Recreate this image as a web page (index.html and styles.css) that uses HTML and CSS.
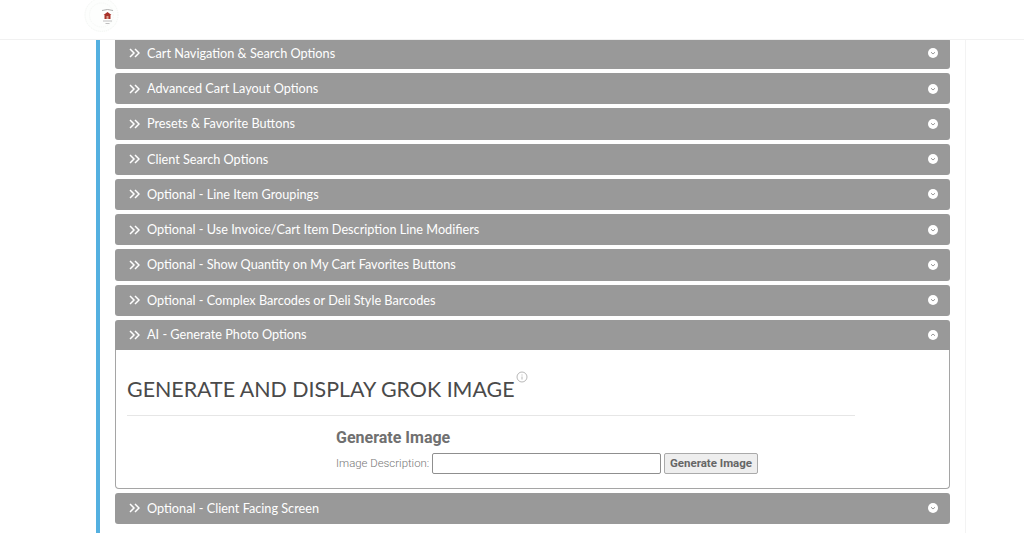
FILE: index.html
```html
<!DOCTYPE html>
<html lang="en">
<head>
<meta charset="utf-8">
<title>Options</title>
<link rel="stylesheet" href="styles.css">
</head>
<body>
<header class="topbar">
  <div class="logo">
    <svg width="44" height="39" viewBox="0 0 44 39">
      <circle cx="21.500" cy="15" r="16.500" fill="#fdfefd" stroke="#f2f5f2" stroke-width="1" stroke-dasharray="1 1"/>
      <circle cx="21.500" cy="15" r="12" fill="none" stroke="#f5f7f5" stroke-width="1" stroke-dasharray="1 1"/>
      <path d="M27.500 12l4 3h-1v4h-6v-4h-1z" fill="#a8322a"/>
      <rect x="26.500" y="16" width="2" height="3" fill="#d9a090"/>
      <path d="M22 10.500q5.500-2 11 0" fill="none" stroke="#9a9a9a" stroke-width="0.800"/>
      <path d="M23 21h9M25.500 23.500h4" stroke="#b0b0b0" stroke-width="0.800"/>
    </svg>
  </div>
</header>
<main class="content">
  <div class="column">
    <section class="acc"><div class="acc-head"><svg class="chev" viewBox="0 0 11 10"><path d="M1 1l4 4-4 4M6 1l4 4-4 4"/></svg><span class="acc-title">Cart Navigation &amp; Search Options</span><span class="toggle"><svg viewBox="0 0 10 10"><path d="M3 4.200l2 1.800 2-1.800" /></svg></span></div></section>
    <section class="acc"><div class="acc-head"><svg class="chev" viewBox="0 0 11 10"><path d="M1 1l4 4-4 4M6 1l4 4-4 4"/></svg><span class="acc-title">Advanced Cart Layout Options</span><span class="toggle"><svg viewBox="0 0 10 10"><path d="M3 4.200l2 1.800 2-1.800" /></svg></span></div></section>
    <section class="acc"><div class="acc-head"><svg class="chev" viewBox="0 0 11 10"><path d="M1 1l4 4-4 4M6 1l4 4-4 4"/></svg><span class="acc-title">Presets &amp; Favorite Buttons</span><span class="toggle"><svg viewBox="0 0 10 10"><path d="M3 4.200l2 1.800 2-1.800" /></svg></span></div></section>
    <section class="acc"><div class="acc-head"><svg class="chev" viewBox="0 0 11 10"><path d="M1 1l4 4-4 4M6 1l4 4-4 4"/></svg><span class="acc-title">Client Search Options</span><span class="toggle"><svg viewBox="0 0 10 10"><path d="M3 4.200l2 1.800 2-1.800" /></svg></span></div></section>
    <section class="acc"><div class="acc-head"><svg class="chev" viewBox="0 0 11 10"><path d="M1 1l4 4-4 4M6 1l4 4-4 4"/></svg><span class="acc-title">Optional - Line Item Groupings</span><span class="toggle"><svg viewBox="0 0 10 10"><path d="M3 4.200l2 1.800 2-1.800" /></svg></span></div></section>
    <section class="acc"><div class="acc-head"><svg class="chev" viewBox="0 0 11 10"><path d="M1 1l4 4-4 4M6 1l4 4-4 4"/></svg><span class="acc-title">Optional - Use Invoice/Cart Item Description Line Modifiers</span><span class="toggle"><svg viewBox="0 0 10 10"><path d="M3 4.200l2 1.800 2-1.800" /></svg></span></div></section>
    <section class="acc"><div class="acc-head"><svg class="chev" viewBox="0 0 11 10"><path d="M1 1l4 4-4 4M6 1l4 4-4 4"/></svg><span class="acc-title">Optional - Show Quantity on My Cart Favorites Buttons</span><span class="toggle"><svg viewBox="0 0 10 10"><path d="M3 4.200l2 1.800 2-1.800" /></svg></span></div></section>
    <section class="acc"><div class="acc-head"><svg class="chev" viewBox="0 0 11 10"><path d="M1 1l4 4-4 4M6 1l4 4-4 4"/></svg><span class="acc-title">Optional - Complex Barcodes or Deli Style Barcodes</span><span class="toggle"><svg viewBox="0 0 10 10"><path d="M3 4.200l2 1.800 2-1.800" /></svg></span></div></section>
    <section class="acc acc-open">
      <div class="acc-head"><svg class="chev" viewBox="0 0 11 10"><path d="M1 1l4 4-4 4M6 1l4 4-4 4"/></svg><span class="acc-title">AI - Generate Photo Options</span><span class="toggle"><svg viewBox="0 0 10 10"><path d="M3 5.800l2-1.800 2 1.800" /></svg></span></div>
      <div class="acc-body">
        <div class="page-head">
          <h2 class="page-title">GENERATE AND DISPLAY GROK IMAGE</h2>
          <svg class="info" viewBox="0 0 12 12"><circle cx="6" cy="6" r="5"/><path d="M6 5.500v3M6 3.500v1"/></svg>
        </div>
        <div class="form-block">
          <h3 class="form-title">Generate Image</h3>
          <div class="form-row">
            <label class="form-label" for="desc">Image Description:</label>
            <input class="form-input" id="desc" type="text">
            <button class="form-btn" type="button">Generate Image</button>
          </div>
        </div>
      </div>
    </section>
    <section class="acc"><div class="acc-head"><svg class="chev" viewBox="0 0 11 10"><path d="M1 1l4 4-4 4M6 1l4 4-4 4"/></svg><span class="acc-title">Optional - Client Facing Screen</span><span class="toggle"><svg viewBox="0 0 10 10"><path d="M3 4.200l2 1.800 2-1.800" /></svg></span></div></section>
  </div>
</main>
</body>
</html>
```
FILE: styles.css
```css
html, body {
  margin: 0;
  height: 533px;
  overflow: hidden;
  background: #fff;
  font-family: "Lato", "Open Sans", sans-serif;
}
.topbar {
  height: 39px;
  border-bottom: 1px solid #f1f1f1;
  padding-left: 80px;
  background: #fff;
}
.logo {
  height: 39px;
  width: 44px;
  overflow: hidden;
}
.content {
  height: 493px;
  margin-left: 96px;
  width: 870px;
  box-sizing: border-box;
  border-left: 4px solid #54b0e0;
  border-right: 1px solid #f3f3f3;
  padding: 0 15px;
  overflow: hidden;
}
.column {
  margin-top: -2.250px;
}
.acc {
  margin-bottom: 4px;
}
.acc-head {
  height: 31.250px;
  background: #999;
  border-radius: 3px;
  display: flex;
  align-items: center;
  padding: 0 12px 0 14px;
  color: #fff;
  font-size: 12.700px;
}
.chev {
  width: 11px;
  height: 10px;
  margin-right: 7px;
  fill: none;
  stroke: #fff;
  stroke-width: 1.500;
  flex: none;
}
.acc-title {
  flex: 1;
  padding-bottom: 1px;
}
.toggle {
  width: 10px;
  height: 10px;
  border-radius: 50%;
  background: #fff;
  display: flex;
}
.toggle svg {
  width: 10px;
  height: 10px;
  fill: none;
  stroke: #999;
  stroke-width: 1;
}
.acc-open {
  margin-bottom: 4.250px;
}
.acc-open .acc-head {
  height: 30.250px;
  border-radius: 3px 3px 0 0;
}
.acc-body {
  height: 138.500px;
  box-sizing: border-box;
  border: 1px solid #a5a5a5;
  border-top: 0;
  border-radius: 0 0 4px 4px;
  padding: 0 11px;
  background: #fff;
}
.page-head {
  width: 728px;
  height: 66px;
  box-sizing: border-box;
  border-bottom: 1px solid #e6e6e6;
  display: flex;
  align-items: flex-start;
}
.page-title {
  margin: 25px 0 0;
  font-size: 21.400px;
  line-height: 28px;
  font-weight: 400;
  color: #4a4a4a;
}
.info {
  width: 12px;
  height: 12px;
  margin: 21px 0 0 1px;
  fill: none;
  stroke: #999;
  stroke-width: 0.700;
}
.form-block {
  margin-left: 209px;
}
.form-title {
  margin: 12px 0 0;
  font-family: "Roboto", sans-serif;
  font-size: 16px;
  line-height: 19px;
  font-weight: 700;
  color: #707070;
}
.form-row {
  margin-top: 5.500px;
  display: flex;
  align-items: center;
  font-family: "Roboto", sans-serif;
  font-size: 11.400px;
}
.form-label {
  color: #777;
  font-weight: 300;
  width: 96px;
  flex: none;
}
.form-input {
  width: 229px;
  height: 21.500px;
  box-sizing: border-box;
  margin: 0 3px 0 0;
  padding: 0 3px;
  border: 1px solid #8f8f8f;
  border-radius: 2px;
  background: #fff;
}
.form-btn {
  height: 21.500px;
  width: 94px;
  padding: 0 0 1px;
  box-sizing: border-box;
  border: 1px solid #aaa;
  border-radius: 2px;
  background: #eee;
  color: #666;
  font: 700 11.500px "Roboto", sans-serif;
}
```
